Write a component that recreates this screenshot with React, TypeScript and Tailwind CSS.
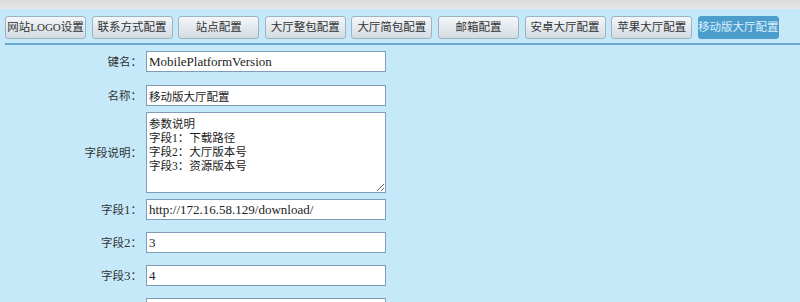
import React from "react";

const CJK = /([\u3000-\u303f\u4e00-\u9fff\uff00-\uffef]+)/;

function T({ s, cls = "text-[11.5px]", latin = "" }: { s: string; cls?: string; latin?: string }) {
  return (
    <>
      {s.split(CJK).map((p, i) =>
        p === "" ? null : CJK.test(p) ? (
          <span key={i} className={cls}>
            {p}
          </span>
        ) : (
          <span key={i} className={latin}>
            {p}
          </span>
        )
      )}
    </>
  );
}

const tabs = [
  "网站LOGO设置",
  "联系方式配置",
  "站点配置",
  "大厅整包配置",
  "大厅简包配置",
  "邮箱配置",
  "安卓大厅配置",
  "苹果大厅配置",
  "移动版大厅配置",
];

const font = "font-['Liberation_Serif','Noto_Sans_CJK_SC',serif]";

function Label({ text }: { text: string }) {
  return (
    <div className="w-[142px] shrink-0 text-right text-[13px] leading-none text-[#333] whitespace-nowrap">
      <T s={text} />
    </div>
  );
}

function Row({ label, value, mt, cjk }: { label: string; value: string; mt: string; cjk?: boolean }) {
  return (
    <div className={`flex items-center ${mt}`}>
      <Label text={label} />
      <input
        readOnly
        value={value}
        className={`ml-[4px] w-[240px] h-[21px] border border-[#7f9db9] bg-white pl-[2px] text-[#222] outline-none ${font} ${
          cjk ? "text-[11.5px]" : "text-[13px]"
        }`}
      />
    </div>
  );
}

export default function App() {
  return (
    <div className={`w-[800px] h-[302px] overflow-hidden bg-[#c6e9fa] ${font}`}>
      <div className="h-[9px] bg-gradient-to-b from-[#dcdcdc] to-[#e6e6e6]" />
      <div className="ml-[5px] pt-[7px] pb-[4px] border-b-2 border-[#6aaad3] flex gap-[5.6px]">
        {tabs.map((t, i) => {
          const active = i === tabs.length - 1;
          return (
            <div
              key={t}
              className={`w-[81px] h-[23px] shrink-0 rounded-[3px] border flex items-center justify-center whitespace-nowrap text-[12px] ${
                active
                  ? "bg-[#4c9dcb] border-[#4c9dcb] text-[#dcefff]"
                  : "bg-gradient-to-b from-[#f4f7f9] to-[#d3dce3] border-[#9fb2c2] text-[#333]"
              }`}
            >
              <T s={t} latin="text-[11px]" />
            </div>
          );
        })}
      </div>
      <div className="flex flex-col">
        <Row label="键名：" value="MobilePlatformVersion" mt="mt-[6px]" />
        <Row label="名称：" value="移动版大厅配置" mt="mt-[13px]" cjk />
        <div className="flex items-center mt-[6px]">
          <Label text="字段说明：" />
          <textarea
            readOnly
            value={"参数说明\n字段1：下载路径\n字段2：大厅版本号\n字段3：资源版本号"}
            className={`ml-[4px] w-[240px] h-[81px] border border-[#7f9db9] bg-white pl-[2px] pt-[4px] text-[11.5px] leading-[14px] text-[#222] outline-none ${font}`}
          />
        </div>
        <Row label="字段1：" value="http://172.16.58.129/download/" mt="mt-[6px]" />
        <Row label="字段2：" value="3" mt="mt-[12px]" />
        <Row label="字段3：" value="4" mt="mt-[12px]" />
        <Row label="" value="" mt="mt-[12px]" />
      </div>
    </div>
  );
}
